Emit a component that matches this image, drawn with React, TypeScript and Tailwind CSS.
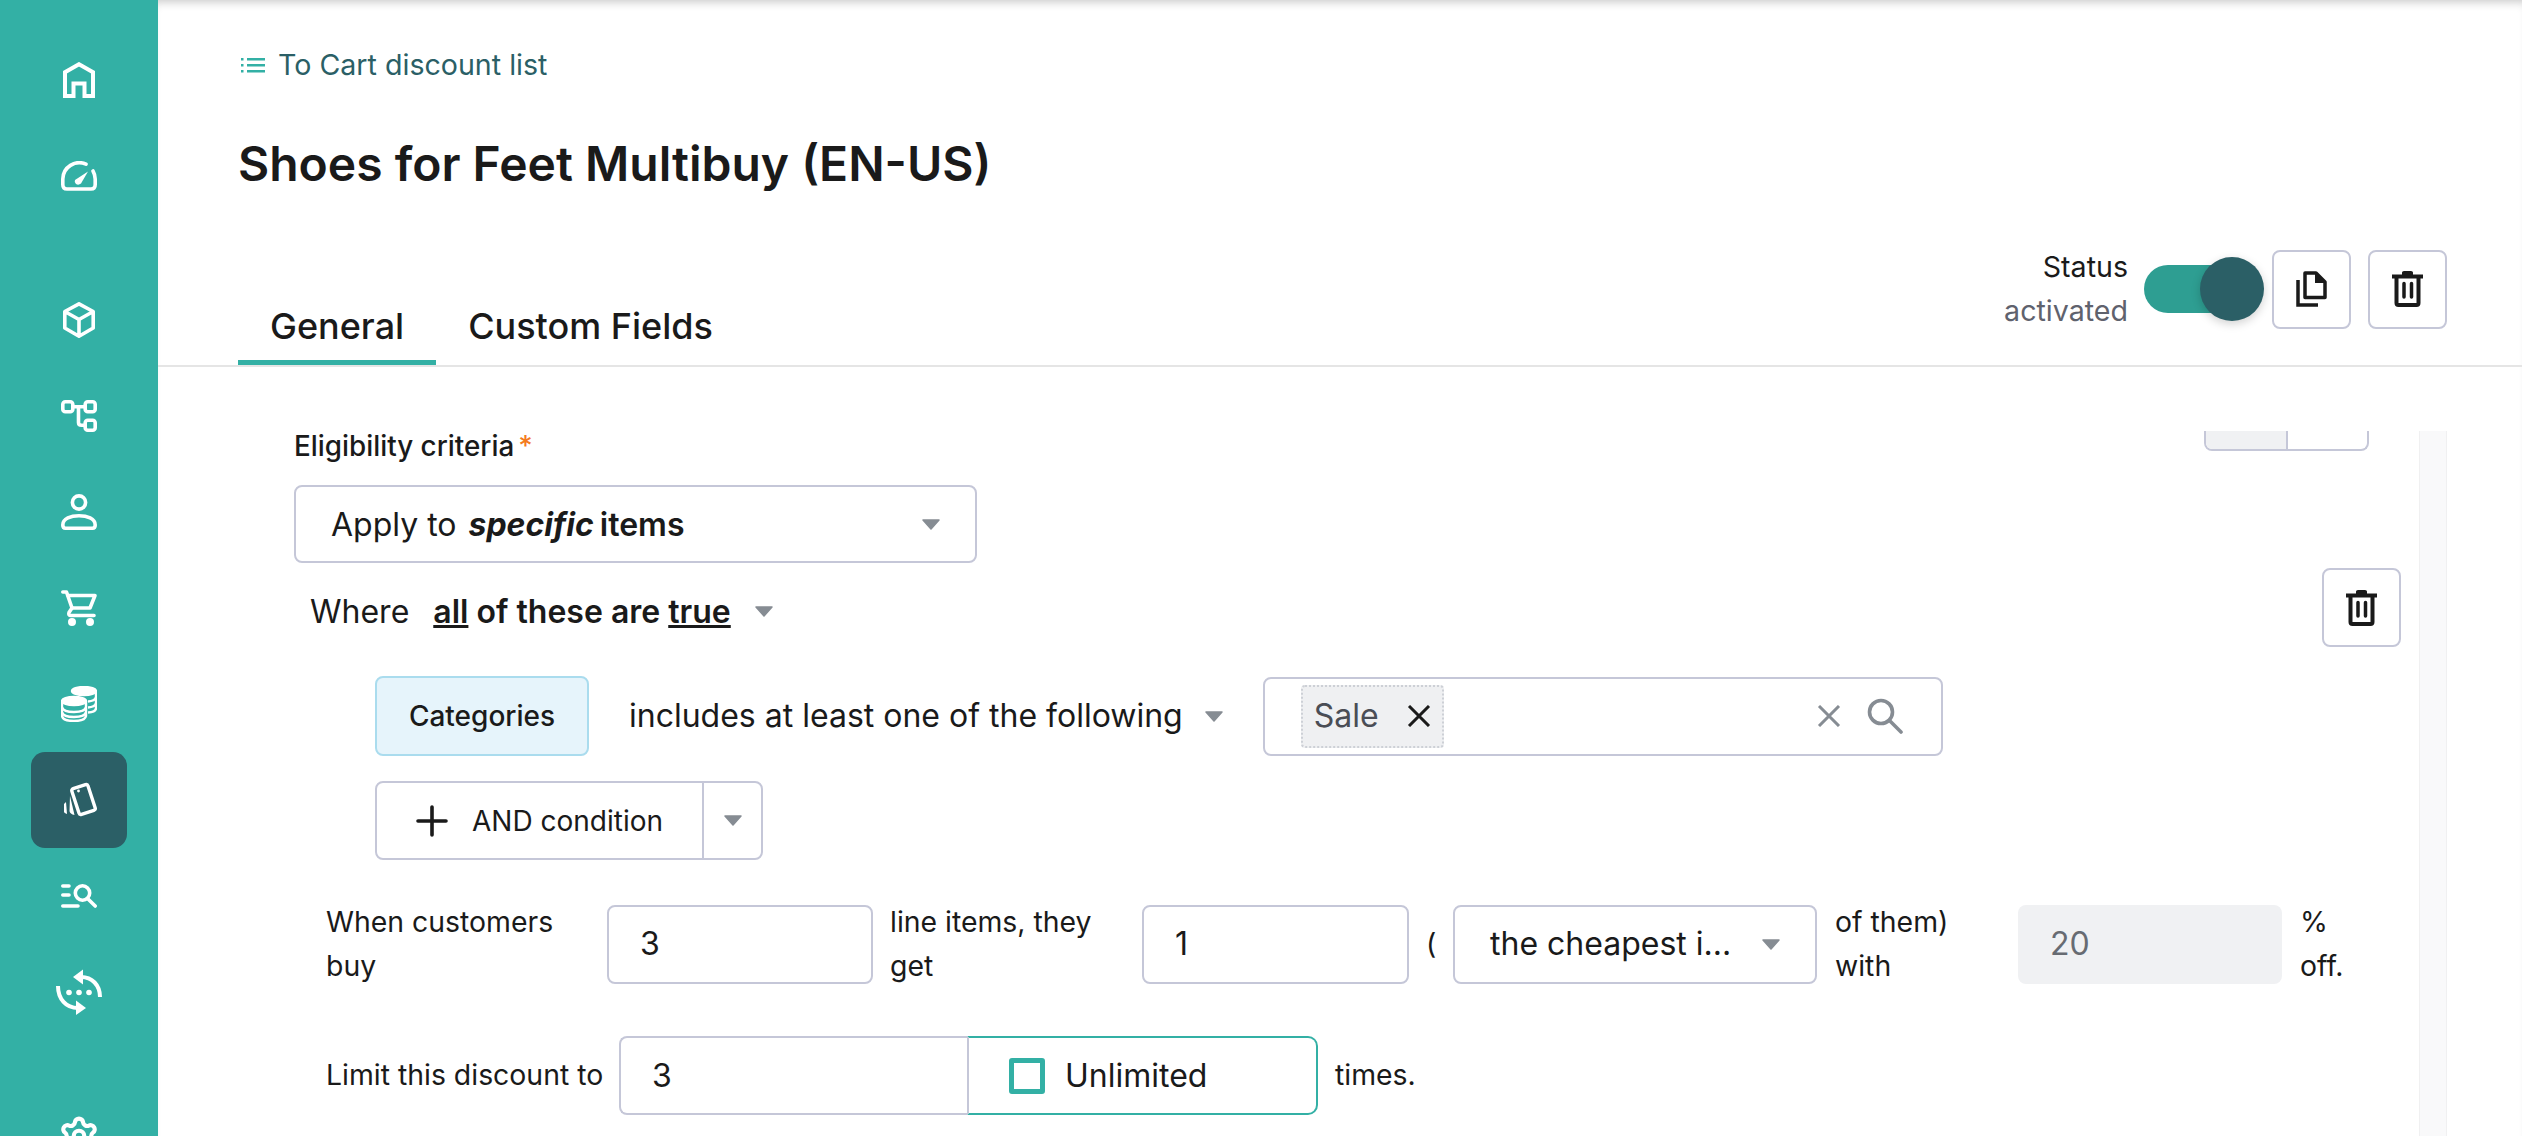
import { Settings } from 'lucide-react';

function Caret() {
  return (
    <svg width="18" height="11" viewBox="0 0 18 11" className="shrink-0">
      <path d="M1 1 H17 L9 10 Z" fill="#868c93" stroke="#868c93" strokeWidth="1.5" strokeLinejoin="round" />
    </svg>
  );
}

function Trash() {
  return (
    <svg width="31" height="36" viewBox="0 0 31 36" fill="none">
      <path d="M0 3.5 H10 V1.5 Q10 0 12 0 H19 Q21 0 21 1.5 V3.5 H31 V7.5 H0 Z" fill="#1a1a1a" />
      <path d="M4.5 7 V32 Q4.5 34 6.5 34 H24.5 Q26.5 34 26.5 32 V7" stroke="#1a1a1a" strokeWidth="4" />
      <path d="M12 12.5 V26 M19.5 12.5 V26" stroke="#1a1a1a" strokeWidth="3.5" strokeLinecap="round" />
    </svg>
  );
}

function Copy() {
  return (
    <svg width="31" height="36" viewBox="0 0 31 36" fill="none">
      <path d="M2 9 V34 H22" stroke="#1a1a1a" strokeWidth="3.5" />
      <path d="M9 2 H20 L29 11 V26.5 H9 Z" stroke="#1a1a1a" strokeWidth="3.5" strokeLinejoin="round" />
      <path d="M19 1 L30 12 H19 Z" fill="#1a1a1a" />
    </svg>
  );
}

const navIcons = {
  home: (
    <svg width="32" height="36" viewBox="0 0 32 36" fill="none" stroke="#fff" strokeWidth="4">
      <path d="M16 2.2 L30 10.2 V34 H21.5 V21.5 H10.5 V34 H2 V10.2 Z" />
    </svg>
  ),
  gauge: (
    <svg width="36" height="30" viewBox="0 0 36 30" fill="none" stroke="#fff" strokeWidth="3.6" strokeLinecap="round">
      <path d="M25 3.2 A16.5 16.5 0 0 0 1.8 18 V23.5 Q1.8 28 6 28 H30 Q34.2 28 34.2 23.5 V18 A16.5 16.5 0 0 0 32 10" />
      <path d="M14 19 L27 10.5 L20 22.5 Q17.5 24.5 15 23 Q13 21 14 19 Z" fill="#fff" stroke="none" />
    </svg>
  ),
  box: (
    <svg width="32" height="36" viewBox="0 0 32 36" fill="none" stroke="#fff" strokeWidth="3.6" strokeLinejoin="round">
      <path d="M16 1.8 L30.2 9.5 V26 L16 34.2 L1.8 26 V9.5 Z M1.8 9.5 L16 17.5 L30.2 9.5 M16 17.5 V34.2" />
    </svg>
  ),
  tree: (
    <svg width="36" height="32" viewBox="0 0 36 32" fill="none" stroke="#fff" strokeWidth="3.6">
      <rect x="1.8" y="1.8" width="10" height="10" rx="2.5" />
      <rect x="24.2" y="1.8" width="10" height="10" rx="2.5" />
      <rect x="24.2" y="20.2" width="10" height="10" rx="2.5" />
      <path d="M11.5 6.8 H24.5 M17.5 6.8 V22.5 Q17.5 25.2 20.5 25.2 H24.5" />
    </svg>
  ),
  user: (
    <svg width="36" height="36" viewBox="0 0 36 36" fill="none" stroke="#fff" strokeWidth="3.6">
      <circle cx="18" cy="8.5" r="6.6" />
      <path d="M4.5 34.2 H31.5 Q34.2 34.2 34.2 31 C34.2 24.5 26 21.8 18 21.8 C10 21.8 1.8 24.5 1.8 31 Q1.8 34.2 4.5 34.2 Z" />
    </svg>
  ),
  cart: (
    <svg width="36" height="36" viewBox="0 0 36 36" fill="none" stroke="#fff" strokeWidth="3.6" strokeLinejoin="round" strokeLinecap="round">
      <path d="M1.8 2 H5.5 L11 18 L8 22.5 Q7 25.5 10 25.5 H33" />
      <path d="M7 5.5 H34 L29 18 H11" />
      <circle cx="11" cy="32" r="2.2" fill="#fff" />
      <circle cx="29" cy="32" r="2.2" fill="#fff" />
    </svg>
  ),
  coins: (
    <svg width="36" height="36" viewBox="0 0 36 36" fill="none" stroke="#fff" strokeWidth="2.4">
      <ellipse cx="23" cy="5" rx="12" ry="4" fill="#fff" />
      <path d="M35 5 V22 Q35 26 27 26.5 M35 11 Q34 15 27 15.5 M35 17 Q34 21 27 21.5" />
      <ellipse cx="13" cy="15" rx="12" ry="4" fill="#fff" />
      <path d="M1 15 V30 Q2 35 13 35 Q24 35 25 30 V15 M1 21 Q2 26 13 26 Q24 26 25 21 M1 26 Q2 31 13 31 Q24 31 25 26" />
    </svg>
  ),
  card: (
    <svg width="36" height="36" viewBox="0 0 36 36" fill="none">
      <rect x="14" y="4" width="17" height="27" rx="2" transform="rotate(-18 22.5 17.5)" stroke="#fff" strokeWidth="3.4" />
      <circle cx="17.5" cy="9" r="1.4" fill="#fff" />
      <path d="M9 14 L13.5 33 Q9 32 8.5 29 Z" fill="#fff" />
      <path d="M3 22 V30 Q3 31 6 32 L5 20 Z" fill="#fff" />
    </svg>
  ),
  search: (
    <svg width="36" height="24" viewBox="0 0 36 24" fill="none" stroke="#fff" strokeWidth="3.6" strokeLinecap="round">
      <path d="M1.8 2 H8 M1.8 11 H8 M1.8 22 H17" />
      <circle cx="21.5" cy="9" r="7.2" />
      <path d="M27 15 L34.2 22" />
    </svg>
  ),
  sync: (
    <svg width="46" height="46" viewBox="0 0 46 46" fill="none">
      <path d="M25 8 C36 8 44 16 44 28" stroke="#fff" strokeWidth="4" />
      <path d="M17 8 L27 0.5 V15.5 Z" fill="#fff" />
      <path d="M2 17 C2 30 10 39 22 39" stroke="#fff" strokeWidth="4" />
      <path d="M30 39 L20 31.5 V46 Z" fill="#fff" />
      <circle cx="13" cy="23.5" r="2.8" fill="#fff" />
      <circle cx="23" cy="23.5" r="2.8" fill="#fff" />
      <circle cx="33" cy="23.5" r="2.8" fill="#fff" />
    </svg>
  ),
};

function NavItem({ children, active }: { children: React.ReactNode; active?: boolean }) {
  return (
    <div className="h-[96px] w-[96px] shrink-0 flex items-center justify-center rounded-[14px]" style={active ? { backgroundColor: '#2b5f66' } : undefined}>
      {children}
    </div>
  );
}

function Sidebar() {
  return (
    <aside className="w-[158px] h-[1136px] shrink-0 bg-[#33b0a5] flex flex-col items-center pt-[32px] overflow-hidden">
      <NavItem>{navIcons.home}</NavItem>
      <NavItem>{navIcons.gauge}</NavItem>
      <div className="h-[48px] shrink-0" />
      <NavItem>{navIcons.box}</NavItem>
      <NavItem>{navIcons.tree}</NavItem>
      <NavItem>{navIcons.user}</NavItem>
      <NavItem>{navIcons.cart}</NavItem>
      <NavItem>{navIcons.coins}</NavItem>
      <NavItem active>{navIcons.card}</NavItem>
      <NavItem>{navIcons.search}</NavItem>
      <NavItem>{navIcons.sync}</NavItem>
      <div className="h-[48px] shrink-0" />
      <NavItem>
        <Settings size={42} color="#fff" strokeWidth={2.4} />
      </NavItem>
    </aside>
  );
}

function Header() {
  return (
    <header className="pl-[80px] pr-[75px] border-b-2 border-[#e5e5e5]">
      <div className="pt-[48px] h-[82px] flex items-center gap-[13px] text-[28.6px] leading-[34px] text-[#2b5f66]">
        <svg className="ml-[3px]" width="24" height="15" viewBox="0 0 24 15" fill="#33b0a5">
          <rect x="0" y="0" width="2.5" height="2.5" />
          <rect x="0" y="6" width="2.5" height="2.5" />
          <rect x="0" y="12" width="2.5" height="2.5" />
          <rect x="6" y="0" width="18" height="2.5" />
          <rect x="6" y="6" width="18" height="2.5" />
          <rect x="6" y="12" width="18" height="2.5" />
        </svg>
        <span>To Cart discount list</span>
      </div>
      <h1 className="mt-[52px] text-[48px] leading-[60px] font-semibold text-[#1a1a1a]">Shoes for Feet Multibuy (EN-US)</h1>
      <div className="h-[171px] flex items-end justify-between">
        <nav className="flex text-[36px] leading-[44px] text-[#1a1a1a]">
          <div className="h-[78px] px-[32px] pt-[17px] border-b-[5px] border-[#33b0a5] font-medium">General</div>
          <div className="h-[78px] px-[32px] pt-[17px] font-medium">Custom Fields</div>
        </nav>
        <div className="flex items-center mb-[32px]">
          <div className="text-right text-[28.6px] leading-[44px]">
            <div className="text-[#1a1a1a]">Status</div>
            <div className="text-[#5f626d]">activated</div>
          </div>
          <div className="relative ml-[16px] w-[120px] h-[64px] flex items-center">
            <div className="w-[100px] h-[48px] rounded-full bg-[#2e9e92]" />
            <div className="absolute right-0 top-0 w-[64px] h-[64px] rounded-full bg-[#2b5f66] shadow-[0_3px_10px_rgba(0,0,0,0.18)]" />
          </div>
          <button className="ml-[8px] w-[79px] h-[79px] flex items-center justify-center border-2 border-[#c5c7d8] rounded-[8px]">
            <Copy />
          </button>
          <button className="ml-[17px] w-[79px] h-[79px] flex items-center justify-center border-2 border-[#c5c7d8] rounded-[8px]">
            <Trash />
          </button>
        </div>
      </div>
    </header>
  );
}

function Field({ width, children, className }: { width: string; children: React.ReactNode; className?: string }) {
  return <div className={`${width} h-[79px] shrink-0 border-2 border-[#c5c7d8] rounded-[8px] flex items-center ${className ?? ''}`}>{children}</div>;
}

function Form() {
  return (
    <div className="flex-1 pl-[136px] pr-[18px] text-[#1a1a1a] text-[28.4px]">
      <div className="h-[54px] flex justify-between items-start">
        <label className="text-[27.8px] leading-[30px] font-medium">
          Eligibility criteria<span className="ml-[4px] text-[#f47b20]">*</span>
        </label>
        <div className="mr-[32px] w-[165px] h-[20px] flex border-2 border-t-0 border-[#c5c7d8] rounded-b-[8px]">
          <div className="w-[82px] bg-[#f0f1f3] border-r-2 border-[#c5c7d8] rounded-bl-[6px]" />
        </div>
      </div>

      <div className="w-[683px] h-[78px] border-2 border-[#c5c7d8] rounded-[8px] flex items-center pl-[35px] pr-[35px] justify-between">
        <span className="text-[32px] pt-[2px]">
          Apply to <b className="ml-[3px] italic font-bold">specific</b> <b className="font-semibold -ml-[3px]">items</b>
        </span>
        <Caret />
      </div>

      <div className="mt-[5px] h-[79px] flex justify-between items-center">
        <div className="pl-[16px] pt-[8px] flex items-center text-[32px]">
          <span>Where</span>
          <span className="ml-[24px] font-semibold">
            <u>all</u> of these are <u>true</u>
          </span>
          <span className="ml-[24px]">
            <Caret />
          </span>
        </div>
        <button className="w-[79px] h-[79px] flex items-center justify-center border-2 border-[#c5c7d8] rounded-[8px]">
          <Trash />
        </button>
      </div>

      <div className="mt-[29px] pl-[81px] flex items-center">
        <div className="w-[214px] h-[80px] shrink-0 flex items-center justify-center rounded-[8px] border-2 border-[#aadcee] bg-[#e6f4fb] text-[28px] font-medium">Categories</div>
        <span className="ml-[40px] text-[32px]">includes at least one of the following</span>
        <span className="ml-[22px]">
          <Caret />
        </span>
        <Field width="w-[680px]" className="ml-[40px] pl-[36px] pr-[38px]">
          <div className="h-[63px] w-[143px] flex items-center justify-between pl-[11px] pr-[11px] bg-[#eff0f2] border-2 border-dotted border-[#cdd0d6] rounded-[4px]">
            <span className="text-[#4a4d55] text-[32px]">Sale</span>
            <svg width="24" height="22" viewBox="0 0 24 22" stroke="#1a1a1a" strokeWidth="3">
              <path d="M2 1 L22 21 M22 1 L2 21" />
            </svg>
          </div>
          <svg className="ml-auto" width="24" height="22" viewBox="0 0 24 22" stroke="#868c93" strokeWidth="3">
            <path d="M2 1 L22 21 M22 1 L2 21" />
          </svg>
          <svg className="ml-[26px]" width="36" height="36" viewBox="0 0 36 36" fill="none" stroke="#868c93" strokeWidth="3.6" strokeLinecap="round">
            <circle cx="14" cy="14" r="11.5" />
            <path d="M23 23 L34 34" />
          </svg>
        </Field>
      </div>

      <div className="mt-[25px] ml-[81px] w-[388px] h-[79px] flex border-2 border-[#c5c7d8] rounded-[8px]">
        <div className="flex-1 flex items-center pl-[39px] border-r-2 border-[#c5c7d8]">
          <svg width="32" height="32" viewBox="0 0 32 32" stroke="#1a1a1a" strokeWidth="3.6" strokeLinecap="round">
            <path d="M16 2 V30 M2 16 H30" />
          </svg>
          <span className="ml-[24px] text-[28px]">AND condition</span>
        </div>
        <div className="w-[57px] flex items-center justify-center">
          <Caret />
        </div>
      </div>

      <div className="mt-[40px] pl-[32px] flex items-center leading-[44px]">
        <div className="w-[281px] shrink-0 pr-[20px]">When customers buy</div>
        <Field width="w-[266px]" className="pl-[31px] text-[32px]">3</Field>
        <div className="w-[269px] shrink-0 pl-[17px] pr-[30px]">line items, they get</div>
        <Field width="w-[267px]" className="pl-[31px] text-[32px]">1</Field>
        <div className="w-[44px] shrink-0 pl-[17px]">(</div>
        <Field width="w-[364px]" className="pl-[35px] pr-[35px] justify-between text-[32px]">
          <span>the cheapest i...</span>
          <Caret />
        </Field>
        <div className="w-[201px] shrink-0 pl-[18px] pr-[50px]">of them) with</div>
        <div className="w-[264px] h-[79px] shrink-0 bg-[#f0f1f3] rounded-[8px] flex items-center pl-[32px] text-[32px] text-[#676b72]">20</div>
        <div className="w-[66px] shrink-0 pl-[18px]">% off.</div>
      </div>

      <div className="mt-[48px] pl-[32px] flex items-center">
        <div className="w-[293px] shrink-0">Limit this discount to</div>
        <div className="w-[348px] h-[79px] shrink-0 flex items-center pl-[31px] border-2 border-r-0 border-[#c5c7d8] rounded-l-[8px] text-[32px]">3</div>
        <div className="w-[351px] h-[79px] shrink-0 flex items-center pl-[40px] border-2 border-[#33b0a5] border-l-[#c5c7d8] rounded-r-[10px] text-[32px]">
          <div className="w-[36px] h-[36px] border-[5px] border-[#33b0a5] rounded-[3px]" />
          <span className="ml-[20px]">Unlimited</span>
        </div>
        <div className="ml-[17px]">times.</div>
      </div>
    </div>
  );
}

export default function App() {
  return (
    <div className="w-[2522px] h-[1136px] flex overflow-hidden bg-white font-['Inter',sans-serif]">
      <Sidebar />
      <main className="flex-1 h-[1136px] flex flex-col overflow-hidden shadow-[inset_0_8px_10px_-6px_rgba(0,0,0,0.22)]">
        <Header />
        <div className="flex-1 min-h-0 pt-[64px] pr-[75px] overflow-hidden flex">
          <Form />
          <div className="w-[28px] shrink-0 bg-[#f9f9fa] border-x border-[#f0f0f1]" />
        </div>
      </main>
    </div>
  );
}
